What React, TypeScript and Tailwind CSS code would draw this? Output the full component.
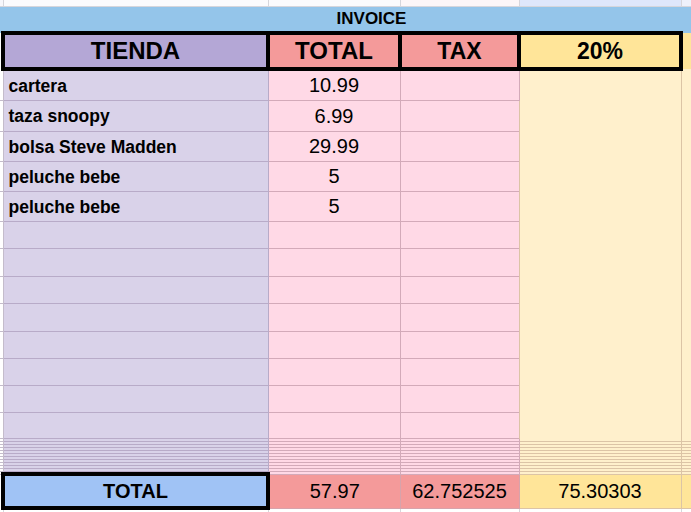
import React from "react";

const items = [
    { name: "cartera", total: "10.99", h: "h-[31px]" },
    { name: "taza snoopy", total: "6.99", h: "h-[31px]" },
    { name: "bolsa Steve Madden", total: "29.99", h: "h-[30px]" },
    { name: "peluche bebe", total: "5", h: "h-[30px]" },
    { name: "peluche bebe", total: "5", h: "h-[30px]" },
];

// empty rows below the entries
const emptyRows = ["h-[27px]", "h-[28px]", "h-[27px]", "h-[28px]", "h-[27px]", "h-[27px]", "h-[27px]", "h-[26px]"];

// hidden rows squeezed together above the total
const denseRows = Array.from({ length: 12 }, (_, i) => i);

export default function App() {
    return (
        <div className="w-[691px] h-[512px] overflow-hidden bg-white font-['Liberation_Sans',Arial,sans-serif] text-black">
            <table className="w-[691px] table-fixed border-collapse">
                <colgroup>
                    <col className="w-[3px]" />
                    <col className="w-[265px]" />
                    <col className="w-[132px]" />
                    <col className="w-[119px]" />
                    <col className="w-[162px]" />
                    <col className="w-[10px]" />
                </colgroup>
                <tbody>
                    {/* top strip of the sheet */}
                    <tr className="h-[6px]">
                        <td className="p-0 bg-[#f7f7fb] border-r border-b border-[#d6d6dc]" />
                        <td className="p-0 bg-[#fbfbfd] border-r border-b border-[#d6d6dc]" />
                        <td className="p-0 bg-[#fbfbfd] border-r border-b border-[#d6d6dc]" />
                        <td className="p-0 bg-[#fcf6f8] border-r border-b border-[#d6d6dc]" />
                        <td className="p-0 bg-[#dfe7fb] border-r border-b border-[#d6d6dc]" />
                        <td className="p-0 bg-[#eef1fb] border-b border-[#d6d6dc]" />
                    </tr>

                    {/* INVOICE band */}
                    <tr className="h-[27px]">
                        <td colSpan={6} className="p-0 pl-[52px] bg-[#94c5ea] text-center text-[17px] font-bold leading-none">
                            INVOICE
                        </td>
                    </tr>

                    {/* header */}
                    <tr className="h-[36px]">
                        <td className="p-0 bg-white border-r-4 border-black" />
                        <td className="p-0 bg-[#b4a7d6] border-4 border-black text-center text-[24px] font-bold leading-none">TIENDA</td>
                        <td className="p-0 bg-[#f49a9a] border-4 border-black text-center text-[24px] font-bold leading-none">TOTAL</td>
                        <td className="p-0 bg-[#f49a9a] border-4 border-black text-center text-[23px] font-bold leading-none">TAX</td>
                        <td className="p-0 bg-[#ffe599] border-4 border-black text-center text-[23px] font-bold leading-none">20%</td>
                        <td className="p-0 bg-[#ffe599]" />
                    </tr>

                    {items.map((item, idx) => (
                        <tr key={idx} className={item.h}>
                            <td className="p-0 bg-white border-r border-b border-[#c4bccb]" />
                            <td className="p-0 pl-[5px] pt-[3px] bg-[#d9d2e9] border-r border-b border-[#b8abc8] text-[17.5px] font-bold leading-none whitespace-nowrap">
                                {item.name}
                            </td>
                            <td className="p-0 bg-[#ffd9e6] border-r border-b border-[#d3aab9] text-center text-[20px] leading-none">
                                {item.total}
                            </td>
                            <td className="p-0 bg-[#ffd9e6] border-r border-b border-[#d3aab9]" />
                            {idx === 0 && (
                                <>
                                    <td rowSpan={13} className="p-0 bg-[#fff0cc] border-l border-r border-[#dcc4a6]" />
                                    <td rowSpan={13} className="p-0 bg-[#fff0cc]" />
                                </>
                            )}
                        </tr>
                    ))}

                    {emptyRows.map((h, idx) => (
                        <tr key={`e${idx}`} className={h}>
                            <td className="p-0 bg-white border-r border-b border-[#c4bccb]" />
                            <td className="p-0 bg-[#d9d2e9] border-r border-b border-[#b8abc8]" />
                            <td className="p-0 bg-[#ffd9e6] border-r border-b border-[#d3aab9]" />
                            <td className="p-0 bg-[#ffd9e6] border-r border-b border-[#d3aab9]" />
                        </tr>
                    ))}

                    {denseRows.map((i) => (
                        <tr key={`d${i}`} className="h-[3px]">
                            <td className="p-0 bg-white border-r border-b border-[#c4bccb]" />
                            <td className="p-0 bg-[#d9d2e9] border-r border-b border-[#b8abc8]" />
                            <td className="p-0 bg-[#ffd9e6] border-r border-b border-[#d3aab9]" />
                            <td className="p-0 bg-[#ffd9e6] border-r border-b border-[#d3aab9]" />
                            <td className="p-0 bg-[#fff0cc] border-r border-b border-[#dcc4a6]" />
                            <td className="p-0 bg-[#fff0cc] border-b border-[#dcc4a6]" />
                        </tr>
                    ))}

                    {/* totals */}
                    <tr className="h-[34px]">
                        <td className="p-0 bg-white border-r-4 border-black" />
                        <td className="p-0 bg-[#a0c3f5] border-4 border-black text-center text-[20px] font-bold leading-none">TOTAL</td>
                        <td className="p-0 bg-[#f49a9a] border-r border-b border-[#d7a3ab] text-center text-[20px] leading-none">57.97</td>
                        <td className="p-0 bg-[#f49a9a] border-r border-b border-[#d7a3ab] text-center text-[20px] leading-none">62.752525</td>
                        <td className="p-0 bg-[#ffe599] border-r border-b border-[#dcc4a6] text-center text-[20px] leading-none">75.30303</td>
                        <td className="p-0 bg-[#ffe599] border-b border-[#dcc4a6]" />
                    </tr>

                    {/* white row below */}
                    <tr className="h-[10px]">
                        <td className="p-0 border-r border-[#d6d6dc]" />
                        <td className="p-0 border-r border-[#d6d6dc]" />
                        <td className="p-0 border-r border-[#d6d6dc]" />
                        <td className="p-0 border-r border-[#d6d6dc]" />
                        <td className="p-0 border-r border-[#d6d6dc]" />
                        <td className="p-0" />
                    </tr>
                </tbody>
            </table>
        </div>
    );
}
